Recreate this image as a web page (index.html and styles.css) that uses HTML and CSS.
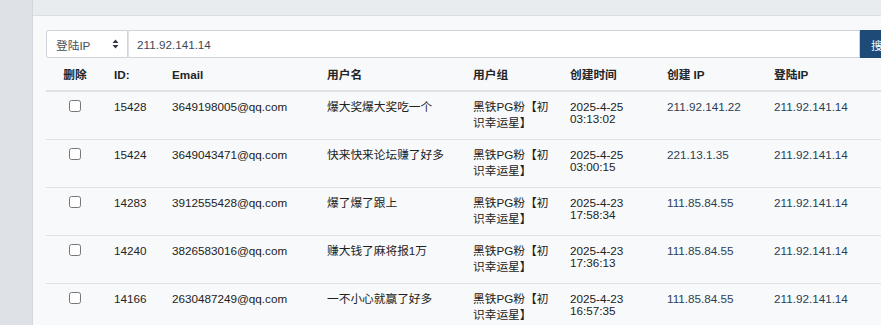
FILE: index.html
```html
<!DOCTYPE html>
<html lang="zh-CN">
<head>
<meta charset="utf-8">
<title>用户列表</title>
<link rel="stylesheet" href="styles.css">
</head>
<body>
<div class="layout">
  <div class="card">
    <div class="card-header">用户列表</div>
    <div class="card-body">
      <form class="search">
        <div class="select">
          <span>登陆IP</span>
          <svg class="caret" width="7" height="10" viewBox="0 0 7 10"><path d="M3.5 0.5 L6.5 4 L0.5 4 Z M3.5 9.5 L6.5 6 L0.5 6 Z" fill="#343a40"/></svg>
        </div>
        <div class="input">211.92.141.14</div>
        <button class="btn" type="button">搜索</button>
      </form>
      <table class="users">
        <colgroup>
          <col class="c-del"><col class="c-id"><col class="c-mail"><col class="c-name"><col class="c-group"><col class="c-time"><col class="c-cip"><col class="c-lip">
        </colgroup>
        <thead>
          <tr><th class="center">删除</th><th>ID:</th><th>Email</th><th>用户名</th><th>用户组</th><th>创建时间</th><th>创建 IP</th><th>登陆IP</th></tr>
        </thead>
        <tbody>
          <tr><td class="center"><input type="checkbox"></td><td>15428</td><td>3649198005@qq.com</td><td>爆大奖爆大奖吃一个</td><td>黑铁PG粉【初识幸运星】</td><td><div class="time">2025-4-25<br>03:13:02</div></td><td class="ip">211.92.141.22</td><td class="ip">211.92.141.14</td></tr>
          <tr><td class="center"><input type="checkbox"></td><td>15424</td><td>3649043471@qq.com</td><td>快来快来论坛赚了好多</td><td>黑铁PG粉【初识幸运星】</td><td><div class="time">2025-4-25<br>03:00:15</div></td><td class="ip">221.13.1.35</td><td class="ip">211.92.141.14</td></tr>
          <tr><td class="center"><input type="checkbox"></td><td>14283</td><td>3912555428@qq.com</td><td>爆了爆了跟上</td><td>黑铁PG粉【初识幸运星】</td><td><div class="time">2025-4-23<br>17:58:34</div></td><td class="ip">111.85.84.55</td><td class="ip">211.92.141.14</td></tr>
          <tr><td class="center"><input type="checkbox"></td><td>14240</td><td>3826583016@qq.com</td><td>赚大钱了麻将报1万</td><td>黑铁PG粉【初识幸运星】</td><td><div class="time">2025-4-23<br>17:36:13</div></td><td class="ip">111.85.84.55</td><td class="ip">211.92.141.14</td></tr>
          <tr><td class="center"><input type="checkbox"></td><td>14166</td><td>2630487249@qq.com</td><td>一不小心就赢了好多</td><td>黑铁PG粉【初识幸运星】</td><td><div class="time">2025-4-23<br>16:57:35</div></td><td class="ip">111.85.84.55</td><td class="ip">211.92.141.14</td></tr>
        </tbody>
      </table>
    </div>
  </div>
</div>
</body>
</html>
```
FILE: styles.css
```css
html, body {
  margin: 0;
  padding: 0;
  overflow: hidden;
}
body {
  background: #dee2e6;
  font-family: "Liberation Sans", Arial, "Noto Sans CJK SC", sans-serif;
  font-size: 11.7px;
  color: #212529;
}
.layout {
  padding-left: 32px;
  margin-top: -29px;
}
.card {
  width: 1000px;
  background: #f8f9fa;
  border-left: 1px solid #d3d7db;
}
.card-header {
  background: #e9ecef;
  border-bottom: 1px solid #dadee2;
  padding: 12px 29px;
  line-height: 20px;
  font-size: 13px;
  color: #495057;
}
.card-body {
  padding: 14px 13px 0;
  width: 870px;
}
.search {
  display: flex;
  height: 28px;
  margin: 0;
}
.select {
  width: 63px;
  display: flex;
  align-items: center;
  justify-content: space-between;
  padding: 0 8px 0 9px;
  background: #fff;
  border: 1px solid #ced4da;
  border-radius: 3px 0 0 3px;
  color: #495057;
}
.caret { display: block; }
.input {
  flex: 1;
  display: flex;
  align-items: center;
  padding: 0 8px;
  background: #fff;
  border: 1px solid #ced4da;
  border-left: 1px solid #dfe3e7;
  color: #3d4a5a;
}
.btn {
  width: 56px;
  border: none;
  background: #1e4a78;
  color: #fff;
  font: inherit;
  text-align: left;
  padding: 0 11px;
}
.users {
  width: 870px;
  table-layout: fixed;
  border-collapse: collapse;
  margin-top: 1px;
}
.c-del { width: 58px; }
.c-id { width: 58px; }
.c-mail { width: 155px; }
.c-name { width: 146px; }
.c-group { width: 97px; }
.c-time { width: 97px; }
.c-cip { width: 107px; }
.users th {
  text-align: left;
  font-weight: bold;
  padding: 8px 10px;
  line-height: 15px;
  border-bottom: 2px solid #dee2e6;
  color: #212529;
}
.users td {
  vertical-align: top;
  padding: 7px 10px 8px;
  line-height: 16px;
  border-bottom: 1px solid #dee2e6;
  color: #222;
}
.users .center { text-align: center; }
.users td.center { padding-top: 5px; }
.users input[type="checkbox"] {
  margin: 3px 0 0;
  width: 12px;
  height: 12px;
}
.time {
  line-height: 12px;
  margin-top: 2px;
}
.users td.ip { color: #2c3e55; }
```
